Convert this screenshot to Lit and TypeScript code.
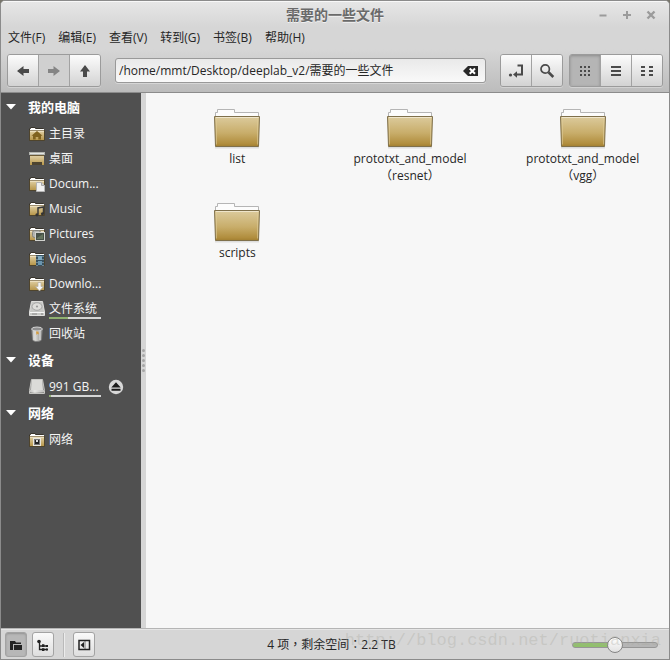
import { LitElement, html, css, svg, nothing } from "lit";
import { customElement, state } from "lit/decorators.js";
import { classMap } from "lit/directives/class-map.js";

const folder = (overlay: unknown = nothing) => svg`
  <path d="M0.5 14.5V2.5H1.5V1.5H6.5V2.5H14.5V14.5Z" fill="#f8f8f6" stroke="#38342c"/>
  <path d="M2 2.5H6M1 3.5H15" stroke="#ffffff"/>
  <rect x="1" y="5" width="14" height="9" fill="url(#gold)"/>
  <path d="M1 4.5H15" stroke="#9d8e6e"/>
  <path d="M1 5.5H15" stroke="#ecdfbf"/>
  <path d="M0.5 4V14.5H15.5V4" fill="none" stroke="#4f442c"/>
  ${overlay}`;

const ICONS: Record<string, unknown> = {
  home: folder(svg`<path d="M8 5L13.5 9.7H12V13.5H9.3V11H6.7V13.5H4V9.7H2.5Z" fill="#80621f"/>`),
  desktop: svg`
    <rect x="0.5" y="1.5" width="15" height="2" fill="#e4e6e2" stroke="#b2b4af"/>
    <rect x="1" y="5" width="14" height="9" fill="url(#gold)"/>
    <path d="M1 4.5H15" stroke="#6d5b35"/>
    <rect x="3" y="11" width="10" height="3" fill="#4d4431"/>`,
  documents: folder(svg`<path d="M7.5 6.5H12.5L15.5 9.5V15.5H7.5Z" fill="#f2f2f2" stroke="#b4b4b4"/><path d="M12.5 6.5V9.5H15.5" fill="#d2d2d2" stroke="#a8a8a8"/>`),
  music: folder(svg`<path d="M9 13.5V7L14.5 6V12.5" fill="none" stroke="#3a3a3a" stroke-width="1.5"/><circle cx="8" cy="13.8" r="1.6" fill="#333"/><circle cx="13.5" cy="12.8" r="1.6" fill="#333"/>`),
  pictures: folder(svg`<rect x="3.5" y="4.5" width="8" height="7" rx="2" fill="#b4b5b0" stroke="#85857f"/><rect x="6.5" y="6.5" width="9" height="8" fill="#485247" stroke="#d1d2ce"/><path d="M8 12L14 8V13H8Z" fill="#65745e"/>`),
  videos: folder(svg`<rect x="7" y="4" width="8" height="11" fill="#37505f"/><rect x="9" y="5" width="4" height="4" fill="#7fa9c0"/><rect x="9" y="10" width="4" height="4" fill="#6a95ae"/><path d="M8 5V15M14 5V15" stroke="#a9bbc5" stroke-dasharray="1 2"/>`),
  downloads: folder(svg`<path d="M9 6.5H12V10.5H14.5L10.5 15L6.5 10.5H9Z" fill="#f6f6f6" stroke="#b5b0a4" stroke-width="0.7"/>`),
  disk: svg`
    <path d="M2.5 0.5H13.5L15.5 11V14.5H0.5V11Z" fill="#c7c8c5" stroke="#dededc"/>
    <ellipse cx="8" cy="5.5" rx="5" ry="3.8" fill="#dededb" stroke="#a5a5a5"/>
    <circle cx="8" cy="5.5" r="1.1" fill="#999"/>
    <path d="M1 11.5H15" stroke="#f6f6f6"/><path d="M3 13H8" stroke="#8e8e8e"/><circle cx="13" cy="13" r="0.8" fill="#777"/>`,
  trash: svg`
    <path d="M2.5 3L3.5 14C5 16 11 16 12.5 14L13.5 3Z" fill="url(#metal)" stroke="#777" stroke-width="0.6"/>
    <path d="M5 5V14M11 5V14" stroke="#e6e6e6"/><path d="M7 5L9 4.5L10 8.5L8.5 7.7L7.5 9Z" fill="#d59c3e"/>
    <ellipse cx="8" cy="3" rx="5.4" ry="2" fill="#909090" stroke="#d4d4d4"/>`,
  drive: svg`
    <path d="M2.5 0.5H13.5L15.5 11.5V14.5H0.5V11.5Z" fill="url(#metal)" stroke="#c5c5c2"/>
    <path d="M3 1H13L14 11H2Z" fill="#dbdbd8"/><path d="M1 12H15" stroke="#f4f4f2"/>`,
  network: folder(svg`<rect x="4" y="6" width="8" height="8" fill="#e9e7df"/><rect x="5.5" y="7.5" width="5" height="5" fill="#222" stroke="#777"/><rect x="7" y="8" width="2" height="2" fill="#ddd"/>`),
  back: svg`<path d="M2 8L8.5 3V6H14V10H8.5V13Z"/>`,
  forward: svg`<path d="M14 8L7.5 3V6H2V10H7.5V13Z"/>`,
  up: svg`<path d="M8 2L13 8.5H10V14H6V8.5H3Z"/>`,
  toggle: svg`<circle cx="2.5" cy="12" r="1.6"/><path d="M9.5 2.5H14V11.5H9" fill="none" stroke="currentColor" stroke-width="2"/><path d="M5 11.5L9 8.2V14.8Z"/>`,
  search: svg`<circle cx="6.2" cy="6" r="4.2" fill="none" stroke="currentColor" stroke-width="1.7"/><path d="M9.5 9.3L14.3 14" stroke="currentColor" stroke-width="2.6"/>`,
  grid: svg`<path d="M3 4H13M3 8H13M3 12H13" stroke="currentColor" stroke-width="2" stroke-dasharray="2 2"/>`,
  list: svg`<path d="M3 4H13M3 8H13M3 12H13" stroke="currentColor" stroke-width="2"/>`,
  compact: svg`<path d="M2 4H14M2 8H14M2 12H14" stroke="currentColor" stroke-width="2" stroke-dasharray="4 4"/>`,
  clear: svg`<path d="M0 8L5 3H15V13H5Z" fill="#282828"/><path d="M6.7 5.5L12 10.7M12 5.5L6.7 10.7" stroke="#fff" stroke-width="2"/>`,
  eject: svg`<circle cx="8" cy="8" r="7.2" fill="#d8d8d8"/><path d="M8 3.3L12.7 8.5H3.3Z M3.5 9.7H12.5V11.8H3.5Z" fill="#1c1c1c"/>`,
  places: svg`<path d="M2 12V4H7L8 5.5H13V7H5V13H2Z M6 8H14V13H6Z"/>`,
  tree: svg`<circle cx="4" cy="4.5" r="1.8"/><path d="M4.5 5V12.5H12M4.5 9H11" fill="none" stroke="currentColor" stroke-width="1.3"/><path d="M7 7.3H9.4V10H7Z M7 11.2H9.4V14H7Z M11 8H13V10H11Z M11 11.5H13V13.5H11Z"/>`,
  panel: svg`<rect x="3" y="3.5" width="10.5" height="9" fill="none" stroke="currentColor" stroke-width="1.5"/><path d="M4.5 8L8 5V11Z"/><path d="M9 4V12" stroke="currentColor" stroke-width="0.6"/>`,
  minimize: svg`<path d="M4.5 8.5H11.5" stroke="currentColor" stroke-width="2"/>`,
  maximize: svg`<path d="M4 8H12M8 4V12" stroke="currentColor" stroke-width="2"/>`,
  close: svg`<path d="M4.5 4.5L11.5 11.5M11.5 4.5L4.5 11.5" stroke="currentColor" stroke-width="2.4"/>`,
  arrow: svg`<path d="M3 5H13L8 10.5Z"/>`,
};

const icon = (name: string) => html`
  <svg class="icon" viewBox="0 0 16 16" fill="currentColor" aria-hidden="true">
    <defs>
      <linearGradient id="gold" x2="0" y2="1"><stop stop-color="#dfcea2"/><stop offset="1" stop-color="#b8974b"/></linearGradient>
      <linearGradient id="metal"><stop stop-color="#8d8d8b"/><stop offset=".35" stop-color="#d9d9d6"/><stop offset="1" stop-color="#858583"/></linearGradient>
    </defs>
    ${ICONS[name]}
  </svg>`;

interface Place { name: string; icon: string; used?: number; eject?: boolean; }

const SECTIONS: { title: string; places: Place[] }[] = [
  { title: "我的电脑", places: [
    { name: "主目录", icon: "home" },
    { name: "桌面", icon: "desktop" },
    { name: "Docum...", icon: "documents" },
    { name: "Music", icon: "music" },
    { name: "Pictures", icon: "pictures" },
    { name: "Videos", icon: "videos" },
    { name: "Downlo...", icon: "downloads" },
    { name: "文件系统", icon: "disk", used: 37 },
    { name: "回收站", icon: "trash" },
  ] },
  { title: "设备", places: [{ name: "991 GB...", icon: "drive", used: 4, eject: true }] },
  { title: "网络", places: [{ name: "网络", icon: "network" }] },
];

const MENUS = ["文件(F)", "编辑(E)", "查看(V)", "转到(G)", "书签(B)", "帮助(H)"];
const FILES = [["list"], ["prototxt_and_model", "（resnet）"], ["prototxt_and_model", "（vgg）"], ["scripts"]];

@customElement("app-root")
export class AppRoot extends LitElement {
  @state() private view = "grid";
  @state() private zoom = 50;

  static styles = css`
    :host {
      display: block;
      background: #77746a;
      font: 12px/17px "Open Sans", "Noto Sans CJK SC", sans-serif;
      color: #262626;
    }
    * { box-sizing: border-box; }
    button, input { font: inherit; color: inherit; margin: 0; padding: 0; border: 0; background: none; }
    .icon { display: block; width: 16px; height: 16px; flex: none; }
    .window {
      display: flex; flex-direction: column; min-height: 100vh;
      border: 1px solid #8b8b8b; border-radius: 5px 5px 0 0; overflow: hidden;
      background: #d6d6d6;
    }
    .titlebar {
      display: grid; grid-template-columns: 1fr auto 1fr; align-items: center; height: 26px;
      border-top: 1px solid #f8f8f8;
      background: linear-gradient(#e6e6e6, #d6d6d6);
    }
    .title {
      grid-column: 2; margin: 0; font-size: 14px; line-height: 20px; font-weight: 700;
      color: #6a6a6a; text-shadow: 0 1px #f0f0f0;
    }
    .controls { display: flex; justify-content: flex-end; gap: 8px; padding-right: 10px; color: #9b9b9b; }
    .menubar { display: flex; gap: 13px; padding: 2px 7px 3px; }
    .toolbar {
      display: flex; align-items: center; height: 44px; padding: 0 6px;
      background: linear-gradient(#d6d6d6, #bcbcbc); border-bottom: 1px solid #8c8c8c;
    }
    .group {
      display: flex; border: 1px solid #9b9b9b; border-radius: 3px; overflow: hidden;
      box-shadow: 0 1px #d2d2d2;
    }
    .group button {
      display: grid; place-items: center; width: 30px; height: 31px; color: #4a4a4a;
      background: linear-gradient(#fcfcfc, #d3d3d3);
    }
    .group button + button { width: 31px; border-left: 1px solid #a2a2a2; }
    .group button:disabled { color: #858585; background: #d0d0d0; }
    .group .on { background: #b5b5b5; box-shadow: inset 0 1px 3px #8b8b8b; }
    .location {
      display: flex; align-items: center; flex: 1; height: 25px; margin: 0 14px;
      padding: 0 6px 0 3px; border: 1px solid #999; border-radius: 3px;
      background: linear-gradient(#e9e9e9, #f9f9f9); box-shadow: 0 1px #d6d6d6;
    }
    .location input { flex: 1; min-width: 0; outline: none; }
    .views { margin-left: 6px; }
    .main { display: flex; flex: 1; }
    .sidebar { width: 140px; flex: none; background: #505050; color: #f4f4f4; }
    .heading {
      display: flex; align-items: center; gap: 9px; width: 100%; height: 28px; padding-left: 2px;
      font-size: 13px; font-weight: 700; color: #fff;
    }
    .row { display: flex; align-items: center; height: 25px; padding-left: 28px; gap: 7px; }
    .place { display: flex; align-items: center; gap: 4px; color: inherit; text-decoration: none; }
    .name { display: block; position: relative; white-space: nowrap; }
    .metered { width: 52px; }
    .meter { position: absolute; left: 0; right: 0; top: 100%; height: 2px; background: #d6d6d6; }
    .used { height: 2px; background: #8fb070; }
    .grip {
      display: flex; flex-direction: column; align-items: center; justify-content: center; gap: 2px;
      width: 5px; background: #d6d6d6;
    }
    .dot { width: 3px; height: 3px; border-radius: 2px; background: #a5a5a5; }
    .files {
      flex: 1; display: grid; grid-template-columns: repeat(3, 1fr); align-content: start;
      gap: 19px 0; padding: 16px 0 0 5px; background: #f7f7f7;
    }
    .file { display: flex; flex-direction: column; align-items: center; gap: 1px; }
    .folder { display: block; width: 48px; height: 40px; }
    .line { display: block; }
    .statusbar {
      position: relative; display: grid; grid-template-columns: 1fr auto 1fr; align-items: center;
      height: 31px; padding: 1px 11px 0 4px; border-top: 1px solid #b5b5b5; box-shadow: inset 0 1px #e6e6e6;
    }
    .tools { display: flex; align-items: center; gap: 5px; }
    .tools button {
      display: grid; place-items: center; width: 22px; height: 25px; color: #222;
      border: 1px solid #a3a3a3; border-radius: 3px; background: linear-gradient(#fafafa, #dedede);
    }
    .tools .on { background: #b7b7b7; box-shadow: inset 0 1px 2px #949494; }
    .rule { width: 1px; height: 24px; margin: 0 4px; background: #bababa; box-shadow: 1px 0 #ececec; }
    .status { font-family: "Open Sans", "Noto Sans CJK TC", sans-serif; }
    .watermark {
      position: absolute; right: 8px; top: 0; pointer-events: none;
      font: 17px/24px "Liberation Mono", monospace; color: #a8a89e55;
    }
    .zoom {
      appearance: none; justify-self: end; width: 86px; height: 17px;
    }
    .zoom::-webkit-slider-runnable-track {
      height: 6px; border: 1px solid #969696; border-radius: 3px;
      background: linear-gradient(90deg, #91c06c var(--level), #b5b5b5 var(--level));
    }
    .zoom::-webkit-slider-thumb {
      appearance: none; width: 16px; height: 16px; margin-top: -6px;
      border: 1px solid #858585; border-radius: 50%; background: linear-gradient(#fff, #e2e2e2);
    }
  `;

  private viewButton(name: string, label: string) {
    return html`<button class=${classMap({ on: this.view === name })} aria-label=${label}
      @click=${() => (this.view = name)}>${icon(name)}</button>`;
  }

  private place(p: Place) {
    return html`<div class="row">
      <a class="place" href="#">${icon(p.icon)}
        <span class=${classMap({ name: true, metered: p.used !== undefined })}>${p.name}${p.used === undefined
          ? nothing
          : html`<span class="meter"><div class="used" style="width:${p.used}%"></div></span>`}</span></a>
      ${p.eject ? html`<button aria-label="弹出">${icon("eject")}</button>` : nothing}
    </div>`;
  }

  private file(lines: string[]) {
    return html`<button class="file">
      <svg class="folder" viewBox="0 0 48 40" aria-hidden="true">
        <defs><linearGradient id="body" x2="0" y2="1">
          <stop stop-color="#dccb9d"/><stop offset=".55" stop-color="#c8ad6a"/><stop offset=".9" stop-color="#b18e3e"/><stop offset="1" stop-color="#a27f30"/>
        </linearGradient></defs>
        <path d="M2 38.5H46" stroke="#ddd" stroke-width="2"/>
        <path d="M2.5 9V3.5H4.5V0.5H21.5V3.5H45.5V9Z" fill="#fcfcfc" stroke="#b5b5b5"/>
        <path d="M1.5 7.5H46.5L45.5 37.5H2.5Z" fill="url(#body)" stroke="#7f704b"/>
        <path d="M3 8.5H45.5" stroke="#efe5ca"/><path d="M3.5 9V35.5M44.5 9V35.5" stroke="#dfcc98" opacity=".6"/>
      </svg>
      <span>${lines.map((l) => html`<span class="line">${l}</span>`)}</span>
    </button>`;
  }

  render() {
    return html`<div class="window">
      <header class="titlebar">
        <h1 class="title">需要的一些文件</h1>
        <div class="controls">
          <button aria-label="最小化">${icon("minimize")}</button>
          <button aria-label="最大化">${icon("maximize")}</button>
          <button aria-label="关闭">${icon("close")}</button>
        </div>
      </header>
      <nav class="menubar">${MENUS.map((m) => html`<button>${m}</button>`)}</nav>
      <div class="toolbar">
        <div class="group">
          <button aria-label="后退">${icon("back")}</button>
          <button aria-label="前进" disabled>${icon("forward")}</button>
          <button aria-label="向上">${icon("up")}</button>
        </div>
        <div class="location">
          <input type="text" aria-label="位置" .value=${"/home/mmt/Desktop/deeplab_v2/需要的一些文件"} />
          <button aria-label="清除">${icon("clear")}</button>
        </div>
        <div class="group">
          <button aria-label="切换位置栏">${icon("toggle")}</button>
          <button aria-label="搜索">${icon("search")}</button>
        </div>
        <div class="group views">
          ${this.viewButton("grid", "图标视图")}${this.viewButton("list", "列表视图")}${this.viewButton("compact", "紧凑视图")}
        </div>
      </div>
      <div class="main">
        <aside class="sidebar">
          ${SECTIONS.map((s) => html`<section>
            <button class="heading" aria-expanded="true">${icon("arrow")}${s.title}</button>
            ${s.places.map((p) => this.place(p))}
          </section>`)}
        </aside>
        <div class="grip">${[0, 1, 2, 3, 4].map(() => html`<i class="dot"></i>`)}</div>
        <main class="files">${FILES.map((f) => this.file(f))}</main>
      </div>
      <footer class="statusbar">
        <div class="tools">
          <button class="on" aria-label="位置">${icon("places")}</button>
          <button aria-label="树">${icon("tree")}</button>
          <i class="rule"></i>
          <button aria-label="隐藏侧边栏">${icon("panel")}</button>
        </div>
        <span class="status" lang="zh-TW">4 项，剩余空间：2.2 TB</span>
        <input class="zoom" type="range" aria-label="缩放" .value=${String(this.zoom)} style="--level:${this.zoom}%"
          @input=${(e: Event) => (this.zoom = Number((e.target as HTMLInputElement).value))} />
        <span class="watermark">http://blog.csdn.net/ruotianxia</span>
      </footer>
    </div>`;
  }
}
